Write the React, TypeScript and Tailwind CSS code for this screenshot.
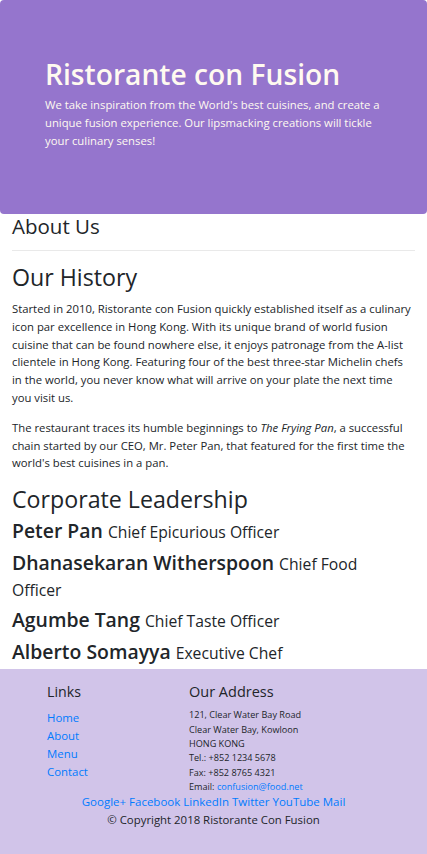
import React from "react";

const names = [
  { n: "Peter Pan", t: "Chief Epicurious Officer" },
  { n: "Dhanasekaran Witherspoon", t: "Chief Food Officer" },
  { n: "Agumbe Tang", t: "Chief Taste Officer" },
  { n: "Alberto Somayya", t: "Executive Chef" },
];

export default function App() {
  return (
    <div className="font-['Segoe_UI','Open_Sans',sans-serif] text-[#212529] bg-white min-h-[854px] w-[427px] overflow-hidden">
      <header className="bg-[#9575CD] text-[#FFFAF0] rounded-[4px] pt-[56px] pb-[64px] pl-[45px] pr-[30px]">
        <h1 className="text-[28.2px] leading-[36px] font-semibold">Ristorante con Fusion</h1>
        <p className="mt-[4px] text-[11.3px] leading-[18px] font-medium">
          We take inspiration from the World's best cuisines, and create a unique fusion experience. Our lipsmacking creations will tickle your culinary senses!
        </p>
      </header>

      <main className="pl-[12px] pr-[15px]">
        <h3 className="text-[20.5px] leading-[25px] font-medium">About Us</h3>
        <hr className="mt-[11px] mr-[-3px] border-t border-[#e9e9e9]" />
        <h2 className="mt-[12px] text-[23.2px] leading-[29px] font-medium">Our History</h2>
        <p className="mt-[8px] text-[11.3px] leading-[17.8px]">
          Started in 2010, Ristorante con Fusion quickly established itself as a culinary icon par excellence in Hong Kong. With its unique brand of world fusion cuisine that can be found nowhere else, it enjoys patronage from the A-list clientele in Hong Kong. Featuring four of the best three-star Michelin chefs in the world, you never know what will arrive on your plate the next time you visit us.
        </p>
        <p className="mt-[12px] text-[11.3px] leading-[17.8px]">
          The restaurant traces its humble beginnings to <em>The Frying Pan</em>, a successful chain started by our CEO, Mr. Peter Pan, that featured for the first time the world's best cuisines in a pan.
        </p>
        <h2 className="mt-[13px] text-[23.2px] leading-[29px] font-medium">Corporate Leadership</h2>
        <div className="mt-[4px] mr-[4px] flex flex-col gap-[5.5px] pb-[4px]">
          {names.map((x) => (
            <h3 key={x.n} className="text-[19.4px] leading-[26px] font-semibold">
              {x.n} <small className="text-[15.7px] leading-none font-normal">{x.t}</small>
            </h3>
          ))}
        </div>
      </main>

      <footer className="bg-[#D1C4E9] pt-[14px] pb-[40px]">
        <div className="flex">
          <div className="pl-[47px] w-[189px]">
            <h5 className="text-[14.2px] leading-[18px] font-medium">Links</h5>
            <ul className="mt-[8px] text-[11.4px] leading-[18px] text-[#007bff]">
              <li>Home</li>
              <li>About</li>
              <li>Menu</li>
              <li>Contact</li>
            </ul>
          </div>
          <div>
            <h5 className="text-[14.5px] leading-[18px] font-medium">Our Address</h5>
            <address className="mt-[7.5px] not-italic text-[9.1px] leading-[14.4px]">
              121, Clear Water Bay Road<br />
              Clear Water Bay, Kowloon<br />
              HONG KONG<br />
              Tel.: +852 1234 5678<br />
              Fax: +852 8765 4321<br />
              Email: <span className="text-[#007bff]">confusion@food.net</span>
            </address>
          </div>
        </div>
        <div className="-mt-[2px] text-center text-[11.5px] leading-[18px] text-[#007bff]">
          Google+ Facebook LinkedIn Twitter YouTube Mail
        </div>
        <p className="text-center text-[11.4px] leading-[18px]">© Copyright 2018 Ristorante Con Fusion</p>
      </footer>
    </div>
  );
}
